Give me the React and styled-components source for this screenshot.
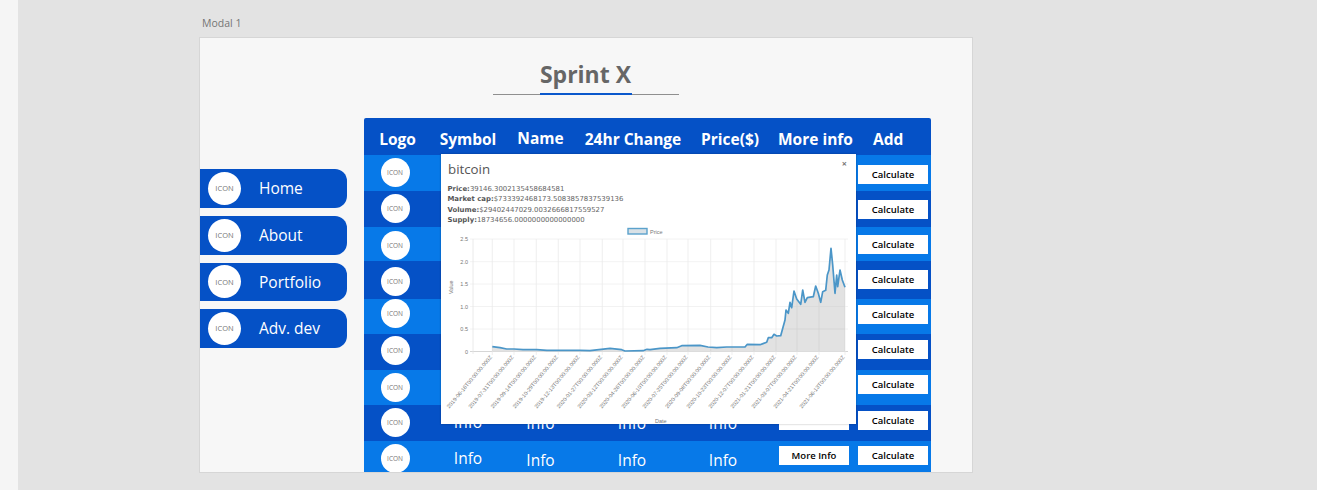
import React from "react";
import styled, { createGlobalStyle } from "styled-components";

const Global = createGlobalStyle`
  html, body { margin: 0; padding: 0; background: #e3e3e3; }
  body { font-family: "Open Sans", "Noto Sans", sans-serif; overflow: hidden; }
`;

const BLUE_DARK = "#0551c6";
const BLUE_LIGHT = "#0779e8";
const COLS = "67px 74px 71px 114px 80px 88px 73px";

const Page = styled.div`display: flex; height: 490px;`;
const Strip = styled.div`width: 18px; background: #f5f5f5; flex: none;`;
const Workspace = styled.main`flex: 1; padding: 16px 0 0 181px; background: #e3e3e3;`;
const FrameLabel = styled.div`font-size: 10.5px; line-height: 14px; height: 21px; color: #757575; padding-left: 3px; box-sizing: border-box;`;
const Frame = styled.section`
  width: 774px; height: 436px; box-sizing: border-box; background: #f7f7f7;
  border: 1px solid #d6d6d6; overflow: hidden; display: flex; flex-direction: column;
`;
const TitleBlock = styled.header`align-self: center; width: 186px; margin-top: 20px; margin-left: -1px; border-bottom: 1px solid #8f8f8f; height: 36px; display: flex; flex-direction: column; align-items: center;`;
const Title = styled.h1`margin: 0; font-size: 23px; line-height: 32px; height: 35px; font-weight: 700; color: #666; white-space: nowrap; flex: none;`;
const TitleBar = styled.div`width: 92px; height: 2px; background: #0a58cc; flex: none;`;
const Main = styled.div`display: flex; margin-top: 23px; align-items: flex-start;`;
const Nav = styled.nav`width: 147px; margin: 51px 17px 0 0; display: flex; flex-direction: column; gap: 8px;`;
const NavItem = styled.a`
  display: flex; align-items: center; height: ${p => p.$h}px; box-sizing: border-box; padding: 0 0 1px 8px;
  background: ${BLUE_DARK}; border-radius: 0 12px 12px 0; color: #fff; font-size: 15.5px;
`;
const NavIcon = styled.span`
  width: 33px; height: 33px; border-radius: 50%; background: #fff; color: #777; font-size: 7.5px;
  display: flex; align-items: center; justify-content: center; flex: none; margin-right: 18px;
`;
const Table = styled.div`position: relative; width: 567px; border-radius: 2px 2px 0 0;`;
const HeadRow = styled.div`display: grid; grid-template-columns: ${COLS}; height: 37px; background: ${BLUE_DARK}; color: #fff; font-weight: 700; font-size: 15.5px; border-radius: 2px 2px 0 0;`;
const HeadCell = styled.div`
  display: flex; align-items: center; justify-content: ${p => (p.$left ? "flex-start" : "center")};
  padding: ${p => (p.$raised ? 3 : 5)}px 0 0 ${p => p.$left || 0}px; white-space: nowrap; box-sizing: border-box; min-width: 0;
`;
const Row = styled.div`display: grid; grid-template-columns: ${COLS}; height: ${p => p.$h}px; background: ${p => (p.$dark ? BLUE_DARK : BLUE_LIGHT)}; overflow: hidden;`;
const LogoCell = styled.div`display: flex; justify-content: center; padding-right: 5px;`;
const RowIcon = styled.span`
  width: 29px; height: 29px; margin-top: ${p => p.$top}px; border-radius: 50%; background: #fff; color: #777;
  font-size: 6.5px; display: flex; align-items: center; justify-content: center;
`;
const InfoCell = styled.div`
  color: #fff; font-size: 15.5px; display: flex; justify-content: center; align-items: flex-start;
  padding: ${p => p.$top}px ${p => p.$right || 0}px 0 0; line-height: 20px; box-sizing: border-box;
`;
const ActionCell = styled.div`display: flex; justify-content: flex-start; padding-left: ${p => p.$pad || 0}px;`;
const ActionButton = styled.button`
  width: 70px; height: 19px; margin-top: ${p => p.$top}px; border: 0; padding: 0; background: #fff; color: #000;
  font-family: "Open Sans", sans-serif; font-weight: 600; font-size: 9.5px;
`;
const Modal = styled.div`
  position: absolute; left: 77px; top: 36px; width: 415px; height: 270px; background: #fff;
  box-shadow: 0 0 2px rgba(0,0,0,.3); display: flex; flex-direction: column;
`;
const ModalHead = styled.div`display: flex; justify-content: space-between; padding: 5px 9px 0 7px; height: 24px; box-sizing: border-box;`;
const ModalTitle = styled.h2`margin: 0; font-size: 13.3px; line-height: 20px; font-weight: 400; color: #555;`;
const Close = styled.span`font-size: 9px; line-height: 9px; color: #777; font-weight: 700;`;
const Stats = styled.div`padding: 5.5px 0 0 6.5px; font-family: "DejaVu Sans", sans-serif; font-size: 6.92px; line-height: 10.5px; color: #666; height: 47px; box-sizing: border-box;`;
const Stat = styled.div`white-space: nowrap;`;
const StatKey = styled.b`color: #555;`;
const ChartSvg = styled.svg`display: block; width: 415px; height: 199px; flex: none;`;
const ChartText = styled.text`font-family: "Liberation Sans", sans-serif; fill: #777; font-size: ${p => p.$s || 5}px;`;

const navItems = [
  { label: "Home", h: 39 },
  { label: "About", h: 39 },
  { label: "Portfolio", h: 38 },
  { label: "Adv. dev", h: 39 },
];

const rows = [
  { h: 36, icon: 3, btn: 10, info: [8, 8, 8, 8], more: 9 },
  { h: 36, icon: 3, btn: 9, info: [8, 8, 8, 8], more: 9 },
  { h: 34, icon: 4, btn: 8, info: [8, 8, 8, 8], more: 9 },
  { h: 38, icon: 6, btn: 9, info: [8, 8, 8, 8], more: 9 },
  { h: 35, icon: 0, btn: 6, info: [8, 8, 8, 8], more: 9 },
  { h: 36, icon: 2, btn: 6, info: [8, 8, 8, 8], more: 9 },
  { h: 35, icon: 3, btn: 5, info: [8, 8, 8, 8], more: 9 },
  { h: 36, icon: 3, btn: 6, info: [7, 8, 8, 8], more: 6 },
  { h: 31, icon: 3, btn: 5, info: [7, 9, 9, 9], more: 5 },
];

const grid = [492.3, 514, 536.3, 558.3, 580, 602.3, 623, 645, 667, 688, 710.7, 732, 754, 776, 797, 819, 845];
const labels = [
  "2019-06-16", "2019-07-31", "2019-09-14", "2019-10-29", "2019-12-13", "2020-01-27", "2020-03-12", "2020-04-26", "2020-06-10",
  "2020-07-25", "2020-09-08", "2020-10-23", "2020-12-07", "2021-01-21", "2021-03-07", "2021-04-21", "2021-06-13",
];
const yTicks = [["2.5", 239], ["2.0", 261.7], ["1.5", 284], ["1.0", 306.5], ["0.5", 329], ["0", 351.5]];
const points = [
  [492.3,346.7],[500,347.7],[506.7,349],[514,349],[523,349.7],[536.7,349.7],[547,350.3],[580,350.3],[590,350.7],[610,348.3],[621.7,349.7],[625,351],[643,350.7],[647,349.3],
  [650,349.7],[660,348.3],[676.7,347.7],[681.7,345.7],[700,345.3],[708,347],[716.7,347.7],[726.7,347],[745,347],[747.3,344.3],[760,344.7],[766.7,342.3],[768.3,337.7],[771.7,337.7],[774,334.3],[776.7,336],[780.7,335.7],[785,320],[786,310],[788.3,313.3],[790,302.3],[791.7,307.7],[794,291],[796.7,299],[800.7,304.3],[802.7,290],[805,302.3],[807.3,297.7],[813.3,296.7],[815.7,286],[818.3,293.3],[820.7,302.3],[822.7,291.7],[825.7,290.3],[827.3,275],[829,270],[831,248.3],[832.7,265],[835,293.3],[836.7,275],[837.7,286.7],[840,270],[842.3,280],[845,287.3],
];
const linePath = points.map(p => p.join(",")).join(" ");
const areaPath = `492.3,351.5 ${linePath} 845,351.5`;

function Chart() {
  return (
    <ChartSvg viewBox="441 225 415 199">
      <defs>
        <clipPath id="area-clip"><polygon points={areaPath} /></clipPath>
      </defs>
      <rect x="628" y="228.5" width="19" height="5.5" fill="#d9e1e6" stroke="#5ba2cc" strokeWidth="1.4" />
      <ChartText x="650" y="233.5" $s={5.5}>Price</ChartText>
      {yTicks.map(([t, y]) => (
        <g key={t}>
          <line x1="470" x2="848" y1={y} y2={y} stroke={t === "0" ? "#ccc" : "#efefef"} strokeWidth="0.8" />
          <ChartText x="468" y={y + 2} textAnchor="end" $s={5.5}>{t}</ChartText>
        </g>
      ))}
      <line x1="473" x2="473" y1="239" y2="354" stroke="#e4e4e4" strokeWidth="0.8" />
      {grid.map(x => <line key={x} x1={x} x2={x} y1="239" y2="355" stroke="#ebebeb" strokeWidth="0.8" />)}
      <polygon points={areaPath} fill="#e2e2e2" />
      <g clipPath="url(#area-clip)">
        {grid.map(x => <line key={x} x1={x} x2={x} y1="239" y2="352" stroke="#d0d0d0" strokeWidth="0.6" />)}
        <line x1="470" x2="848" y1="329" y2="329" stroke="#d0d0d0" strokeWidth="0.6" />
        <line x1="470" x2="848" y1="306.5" y2="306.5" stroke="#d6d6d6" strokeWidth="0.6" />
      </g>
      <polyline points={linePath} fill="none" stroke="#4b96c8" strokeWidth="1.7" strokeLinejoin="round" />
      <ChartText transform="translate(453 294) rotate(-90)" $s={5.5}>Value</ChartText>
      <ChartText x="655" y="423" $s={5.5}>Date</ChartText>
      {grid.map((x, i) => (
        <ChartText key={x} transform={`translate(${x} 357.5) rotate(-50)`} textAnchor="end" $s={5.5}>
          {labels[i]}T00:00:00.000Z
        </ChartText>
      ))}
    </ChartSvg>
  );
}

export default function App() {
  return (
    <Page>
      <Global />
      <Strip />
      <Workspace>
        <FrameLabel>Modal 1</FrameLabel>
        <Frame>
          <TitleBlock>
            <Title>Sprint X</Title>
            <TitleBar />
          </TitleBlock>
          <Main>
            <Nav>
              {navItems.map(n => (
                <NavItem key={n.label} $h={n.h}><NavIcon>ICON</NavIcon>{n.label}</NavItem>
              ))}
            </Nav>
            <Table>
              <HeadRow>
                <HeadCell>Logo</HeadCell>
                <HeadCell>Symbol</HeadCell>
                <HeadCell $raised>Name</HeadCell>
                <HeadCell>24hr Change</HeadCell>
                <HeadCell>Price($)</HeadCell>
                <HeadCell $left={8}>More info</HeadCell>
                <HeadCell $left={15}>Add</HeadCell>
              </HeadRow>
              {rows.map((r, i) => (
                <Row key={i} $h={r.h} $dark={i % 2 === 1}>
                  <LogoCell><RowIcon $top={r.icon}>ICON</RowIcon></LogoCell>
                  <InfoCell $top={r.info[0]}>Info</InfoCell>
                  <InfoCell $top={r.info[1]}>Info</InfoCell>
                  <InfoCell $top={r.info[2]} $right={2}>Info</InfoCell>
                  <InfoCell $top={r.info[3]} $right={14}>Info</InfoCell>
                  <ActionCell $pad={9}><ActionButton $top={r.more}>More Info</ActionButton></ActionCell>
                  <ActionCell><ActionButton $top={r.btn}>Calculate</ActionButton></ActionCell>
                </Row>
              ))}
              <Modal>
                <ModalHead>
                  <ModalTitle>bitcoin</ModalTitle>
                  <Close>×</Close>
                </ModalHead>
                <Stats>
                  <Stat><StatKey>Price:</StatKey>39146.3002135458684581</Stat>
                  <Stat><StatKey>Market cap:</StatKey>$733392468173.5083857837539136</Stat>
                  <Stat><StatKey>Volume:</StatKey>$29402447029.0032666817559527</Stat>
                  <Stat><StatKey>Supply:</StatKey>18734656.0000000000000000</Stat>
                </Stats>
                <Chart />
              </Modal>
            </Table>
          </Main>
        </Frame>
      </Workspace>
    </Page>
  );
}
